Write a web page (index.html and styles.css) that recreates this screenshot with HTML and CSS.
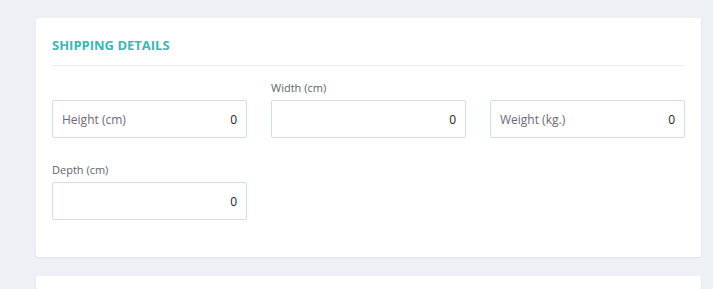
FILE: index.html
```html
<!DOCTYPE html>
<html>
<head>
<meta charset="utf-8">
<link rel="stylesheet" href="styles.css">
</head>
<body>
<div class="page">
  <div class="card card-prev"></div>
  <section class="card">
    <h2 class="title">SHIPPING DETAILS</h2>
    <div class="grid">
      <div class="field">
        <div class="box"><span class="inner-label">Height (cm)</span><span class="val">0</span></div>
      </div>
      <div class="field">
        <label class="label">Width (cm)</label>
        <div class="box"><span class="inner-label"></span><span class="val">0</span></div>
      </div>
      <div class="field">
        <div class="box"><span class="inner-label">Weight (kg.)</span><span class="val">0</span></div>
      </div>
      <div class="field">
        <label class="label">Depth (cm)</label>
        <div class="box"><span class="inner-label"></span><span class="val">0</span></div>
      </div>
    </div>
  </section>
  <div class="card card-next"></div>
</div>
</body>
</html>
```
FILE: styles.css
```css
html, body {
  margin: 0;
  padding: 0;
  background: #edf0f4;
  font-family: "Open Sans", "Liberation Sans", sans-serif;
  overflow: hidden;
}
.page {
  display: flex;
  flex-direction: column;
  gap: 19px;
  padding: 0 12px 0 36px;
  margin-top: -1px;
}
.card {
  background: #fff;
  border-radius: 2px;
  box-shadow: 0 1px 2px rgba(40, 60, 90, 0.08);
}
.card-prev {
  height: 0;
}
.card-next {
  height: 13px;
}
section.card {
  padding: 18px 16px 37px 16px;
}
.title {
  margin: 0;
  font-size: 13px;
  font-weight: 700;
  color: #3ab8b2;
  line-height: 18px;
  padding-bottom: 11px;
  border-bottom: 1px solid #e9ecef;
}
.grid {
  display: grid;
  grid-template-columns: repeat(3, 195px);
  column-gap: 24px;
  row-gap: 24px;
  margin-top: 14px;
  align-items: end;
}
.field {
  display: flex;
  flex-direction: column;
}
.label {
  font-size: 11px;
  line-height: 16px;
  color: #5f6368;
  margin-bottom: 4px;
}
.box {
  height: 38px;
  box-sizing: border-box;
  border: 1px solid #cfe0df;
  border-radius: 2px;
  display: flex;
  align-items: center;
  justify-content: space-between;
  padding: 0 9px 0 9px;
  font-size: 12px;
}
.inner-label {
  color: #6e6878;
}
.val {
  color: #222;
}
```
